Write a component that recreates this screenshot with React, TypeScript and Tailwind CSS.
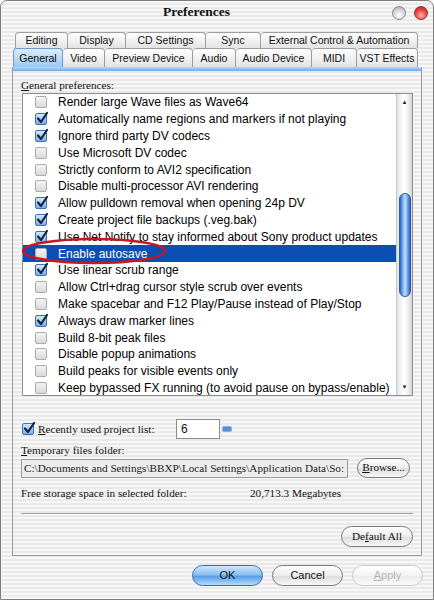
import React from "react";

const items: [string, boolean][] = [
  ["Render large Wave files as Wave64", false],
  ["Automatically name regions and markers if not playing", true],
  ["Ignore third party DV codecs", true],
  ["Use Microsoft DV codec", false],
  ["Strictly conform to AVI2 specification", false],
  ["Disable multi-processor AVI rendering", false],
  ["Allow pulldown removal when opening 24p DV", true],
  ["Create project file backups (.veg.bak)", true],
  ["Use Net Notify to stay informed about Sony product updates", true],
  ["Enable autosave", false],
  ["Use linear scrub range", true],
  ["Allow Ctrl+drag cursor style scrub over events", false],
  ["Make spacebar and F12 Play/Pause instead of Play/Stop", false],
  ["Always draw marker lines", true],
  ["Build 8-bit peak files", false],
  ["Disable popup animations", false],
  ["Build peaks for visible events only", false],
  ["Keep bypassed FX running (to avoid pause on bypass/enable)", false],
];

const row1: [string, string][] = [
  ["Editing", "w-[53px]"],
  ["Display", "w-[58px]"],
  ["CD Settings", "w-[80px]"],
  ["Sync", "w-[55px]"],
  ["External Control & Automation", "w-[157px]"],
];

const row2: [string, string][] = [
  ["General", "w-[50px]"],
  ["Video", "w-[42px]"],
  ["Preview Device", "w-[88px]"],
  ["Audio", "w-[43px]"],
  ["Audio Device", "w-[76px]"],
  ["MIDI", "w-[45px]"],
  ["VST Effects", "w-[61px]"],
];

const stripes =
  "bg-[repeating-linear-gradient(180deg,#f7f7f7_0px,#f7f7f7_2px,#e9e9e9_2px,#e9e9e9_4px)]";

function Check({ checked }: { checked: boolean }) {
  if (checked) {
    return (
      <span className="relative block w-[12px] h-[12px] shrink-0 rounded-[2px] border border-[#3d6fb5] bg-[linear-gradient(180deg,#d7e8fb,#79aeea)]">
        <svg viewBox="0 0 14 14" className="absolute left-[-1px] top-[-3px] w-[14px] h-[14px]">
          <path d="M3 7.5 L6 11 L12 2" fill="none" stroke="#14243f" strokeWidth="2.2" strokeLinecap="round" strokeLinejoin="round" />
        </svg>
      </span>
    );
  }
  return (
    <span className="block w-[12px] h-[12px] shrink-0 rounded-[2px] border border-[#ababab] bg-[linear-gradient(180deg,#f4f4f4,#dadada)]" />
  );
}

function Tab({ label, w, first, selected }: { label: string; w: string; first?: boolean; selected?: boolean }) {
  return (
    <div
      className={`${w} h-full flex items-center justify-center border-t border-r rounded-t-[4px] text-[10.5px] leading-none ${
        first ? "border-l" : ""
      } ${
        selected
          ? "border-[#6d9bd2] bg-[linear-gradient(180deg,#dcecfc,#9bc8f2)] text-[#0a0a0a]"
          : "border-[#9d9d9d] bg-[linear-gradient(180deg,#ffffff,#e3e3e3)] text-[#111]"
      }`}
    >
      {label}
    </div>
  );
}

function AquaButton({ children, variant, w }: { children: React.ReactNode; variant: "ok" | "normal" | "disabled"; w: string }) {
  const cls =
    variant === "ok"
      ? "border-[#3a6cb3] bg-[linear-gradient(180deg,#d2e7fc,#8cc0f3_45%,#5b9ee8_55%,#b4dafc)] text-[#111]"
      : variant === "disabled"
      ? "border-[#c9c9c9] bg-[linear-gradient(180deg,#ffffff,#f3f3f3_50%,#ececec_55%,#fafafa)] text-[#b3b3b3]"
      : "border-[#7a7a7a] bg-[linear-gradient(180deg,#ffffff,#ededed_50%,#dedede_55%,#f7f7f7)] text-[#111]";
  return (
    <div className={`${w} h-[21px] rounded-full border flex items-center justify-center ${cls}`}>{children}</div>
  );
}

export default function App() {
  return (
    <div
      className={`w-[434px] h-[600px] overflow-hidden border border-[#7e7e7e] rounded-t-[7px] flex flex-col ${stripes} font-['Liberation_Sans',Arial,sans-serif]`}
    >
      {/* title bar */}
      <div className="h-[23px] flex items-center shrink-0">
        <div className="flex-1 text-center font-['Liberation_Serif',serif] font-bold text-[13.5px] text-[#111]">
          Preferences
        </div>
        <div className="flex items-center gap-[8px] pr-[5px]">
          <span className="w-[14px] h-[14px] rounded-full border border-[#8a8a8a] bg-[radial-gradient(circle_at_50%_70%,#ffffff,#d0d0d0_60%,#9a9a9a)]" />
          <span className="w-[14px] h-[14px] rounded-full border border-[#9a2a2a] bg-[radial-gradient(circle_at_50%_70%,#ffb0a8,#e5453c_55%,#a81c14)]" />
        </div>
      </div>

      {/* tabs */}
      <div className="mt-[8px] flex h-[16px] pl-[14px] shrink-0">
        {row1.map(([l, w], i) => (
          <Tab key={l} label={l} w={w} first={i === 0} />
        ))}
      </div>
      <div className="flex h-[19px] pl-[12px] shrink-0">
        {row2.map(([l, w], i) => (
          <Tab key={l} label={l} w={w} first={i === 0} selected={i === 0} />
        ))}
      </div>

      {/* panel */}
      <div className="ml-[11px] w-[410px] border-x border-b border-[#9a9a9a] flex flex-col">
        <div className="h-[4px] bg-[linear-gradient(180deg,#b6d8f8,#6da9e8)] rounded-tr-[3px]" />
        <div className="px-[8px] pt-[7px] pb-[8px] flex flex-col font-['Liberation_Serif',serif] text-[11.2px] text-[#111]">
          <div className="h-[14px] leading-[14px]">
            <span className="underline">G</span>eneral preferences:
          </div>
          {/* list box */}
          <div className="relative mt-[1px] ml-[1px] w-[391px] h-[303px] border border-[#8e8e8e] bg-white flex font-['Liberation_Sans',Arial,sans-serif] text-[12px]">
            <div className="flex-1 overflow-hidden flex flex-col">
              {items.map(([t, c], i) => {
                const sel = i === 9;
                return (
                  <div
                    key={t}
                    className={`h-[16.8px] shrink-0 flex items-center pl-[12px] gap-[11px] whitespace-nowrap ${
                      sel ? "bg-[#0c4fb4] text-white" : "text-black"
                    }`}
                  >
                    <Check checked={c} />
                    <span className="leading-none">{t}</span>
                  </div>
                );
              })}
            </div>
            {/* scrollbar */}
            <div className="w-[16px] h-full border-l border-[#c4c4c4] bg-[linear-gradient(90deg,#e4e4e4,#ffffff_45%,#f2f2f2_70%,#d6d6d6)] flex flex-col items-center">
              <div className="h-[16px] flex items-center justify-center text-[6px] text-[#222] leading-none">▲</div>
              <div className="mt-[83px] w-[12px] h-[104px] rounded-full border border-[#2d5ca8] bg-[linear-gradient(90deg,#2a60c2,#7db6f2_30%,#c0e0fc_50%,#7db6f2_70%,#2a60c2)]" />
              <div className="flex-1" />
              <div className="h-[16px] flex items-center justify-center text-[6px] text-[#222] leading-none">▼</div>
            </div>
            {/* red annotation ellipse */}
            <svg className="absolute left-[-3px] top-[143px] w-[148px] h-[28px]" viewBox="0 0 148 28">
              <ellipse cx="74" cy="14" rx="71" ry="12" fill="none" stroke="#c8171f" strokeWidth="2.4" />
            </svg>
          </div>

          {/* recently used */}
          <div className="mt-[23px] h-[20px] flex items-center">
            <span className="ml-[1px] flex">
              <Check checked={true} />
            </span>
            <span className="ml-[4px] w-[138px]">
              <span className="underline">R</span>ecently used project list:
            </span>
            <div className="w-[44px] h-[20px] border border-[#8c8c8c] bg-white flex items-center pl-[4px] font-['Liberation_Sans',Arial,sans-serif] text-[12px]">
              6
            </div>
            <svg className="ml-[2px] w-[10px] h-[10px]" viewBox="0 0 10 10">
              <rect x="0" y="2" width="10" height="6" rx="2" fill="#7fb2ea" />
              <path d="M1 4 H9 M1 6 H9" stroke="#2d63b8" strokeWidth="0.9" />
            </svg>
          </div>

          <div className="mt-[4px] h-[14px] leading-[14px]">
            <span className="underline">T</span>emporary files folder:
          </div>

          <div className="mt-[2px] h-[19px] flex items-center">
            <div className="w-[327px] h-[19px] border border-[#9a9a9a] bg-[#ececec] flex items-center pl-[2px] whitespace-nowrap overflow-hidden text-[#222]">
              C:\Documents and Settings\BBXP\Local Settings\Application Data\So:
            </div>
            <div className="ml-[9px] w-[53px] h-[20px] -mt-[2px] rounded-full border border-[#7a7a7a] bg-[linear-gradient(180deg,#ffffff,#ededed_50%,#dedede_55%,#f7f7f7)] flex items-center justify-center">
              <span className="underline">B</span>rowse...
            </div>
          </div>

          <div className="mt-[8px] h-[14px] leading-[14px] flex">
            <span className="w-[229px]">Free storage space in selected folder:</span>
            <span>20,713.3 Megabytes</span>
          </div>

          <div className="mt-[13px] h-[2px] border-t border-[#9c9c9c] border-b border-b-white" />

          <div className="mt-[11px] flex justify-end">
            <div className="w-[72px] h-[21px] rounded-full border border-[#7a7a7a] bg-[linear-gradient(180deg,#ffffff,#ededed_50%,#dedede_55%,#f7f7f7)] flex items-center justify-center">
              De<span className="underline">f</span>ault All
            </div>
          </div>
        </div>
      </div>

      {/* bottom buttons */}
      <div className="mt-[9px] flex pl-[191px] gap-[9px] text-[11px]">
        <AquaButton variant="ok" w="w-[71px]">OK</AquaButton>
        <AquaButton variant="normal" w="w-[71px]">Cancel</AquaButton>
        <AquaButton variant="disabled" w="w-[71px]">
          <span>
            <span className="underline">A</span>pply
          </span>
        </AquaButton>
      </div>
    </div>
  );
}
